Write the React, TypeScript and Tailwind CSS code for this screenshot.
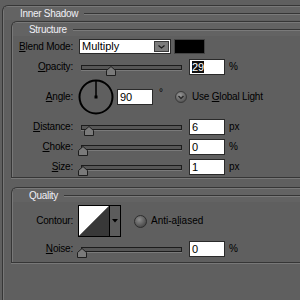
import React from 'react';

const labelCls = 'w-[60px] text-right text-[10px] leading-none tracking-[-0.2px] whitespace-nowrap text-black shrink-0';

function Etch() {
  return <div className="flex-1 h-[2px] border-t border-[#353535] bg-[#7a7a7a]" />;
}

function GroupTitle({ text, indent }: { text: string; indent: string }) {
  return (
    <div className="flex items-center h-[13px] bg-[#636363]">
      <span className={`${indent} pr-[6px] text-[10px] leading-none tracking-[-0.3px] text-[#f0f0f6] whitespace-nowrap`}>{text}</span>
      <Etch />
    </div>
  );
}

function Thumb({ left }: { left: number }) {
  return (
    <svg className="absolute top-0" style={{ left }} width="10" height="10" viewBox="0 0 10 10">
      <polygon points="0.5,9.5 0.5,4.5 5,0.5 9.5,4.5 9.5,9.5" fill="#7a7a7a" stroke="#1e1e1e" strokeWidth="1" />
    </svg>
  );
}

function Slider({ thumb }: { thumb: number }) {
  return (
    <div className="relative w-[101px] h-[5px] border border-[#1c1c1c] bg-[#565656] shadow-[0_1px_0_#7a7a7a]">
      <Thumb left={thumb} />
    </div>
  );
}

function Field({ value, selected }: { value: string; selected?: boolean }) {
  return (
    <div className="w-[36px] h-[16px] bg-white border border-[#2a2a2a] text-[11px] leading-[14px] pl-[2px] text-black">
      {selected ? <span className="bg-[#101010] text-white">{value}</span> : value}
    </div>
  );
}

function SliderRow({ label, thumb, value, unit, selected, mt }: { label: React.ReactNode; thumb: number; value: string; unit: string; selected?: boolean; mt: string }) {
  return (
    <div className={`flex items-center h-[16px] ${mt}`}>
      <div className={labelCls}>{label}</div>
      <div className="ml-[8px]">
        <Slider thumb={thumb} />
      </div>
      <div className="ml-[7px]">
        <Field value={value} selected={selected} />
      </div>
      <span className="ml-[4px] text-[10px] leading-none text-black">{unit}</span>
    </div>
  );
}

function Dial() {
  return (
    <svg width="36" height="36" viewBox="0 0 36 36">
      <circle cx="18" cy="18" r="16.5" fill="none" stroke="#000" strokeWidth="2" />
      <line x1="18" y1="18" x2="18" y2="2" stroke="#000" strokeWidth="1.5" />
      <rect x="16.5" y="16.5" width="3" height="3" fill="#000" />
    </svg>
  );
}

function GlobalIcon() {
  return (
    <svg width="12" height="12" viewBox="0 0 12 12">
      <defs>
        <radialGradient id="gl" cx="0.4" cy="0.35" r="0.7">
          <stop offset="0" stopColor="#9a9a9a" />
          <stop offset="1" stopColor="#4a4a4a" />
        </radialGradient>
      </defs>
      <circle cx="6" cy="6" r="5.5" fill="url(#gl)" stroke="#3a3a3a" />
      <path d="M3.5 5 L6 7.5 L8.5 5" fill="none" stroke="#2a2a2a" strokeWidth="1.5" />
    </svg>
  );
}

function Radio() {
  return (
    <svg width="13" height="13" viewBox="0 0 13 13">
      <defs>
        <radialGradient id="rb" cx="0.4" cy="0.35" r="0.75">
          <stop offset="0" stopColor="#8c8c8c" />
          <stop offset="1" stopColor="#3c3c3c" />
        </radialGradient>
      </defs>
      <circle cx="6.5" cy="6.5" r="6" fill="url(#rb)" stroke="#2e2e2e" />
    </svg>
  );
}

function Contour() {
  return (
    <div className="flex w-[43px] h-[32px] border border-black">
      <svg width="30" height="30" viewBox="0 0 30 30">
        <polygon points="0,0 30,0 0,30" fill="#fff" />
        <polygon points="0,30 30,0 30,30" fill="#383838" />
      </svg>
      <div className="flex-1 flex items-center justify-center bg-[#5c5c5c] border-l border-black">
        <svg width="6" height="4" viewBox="0 0 6 4">
          <polygon points="0,0 6,0 3,3.5" fill="#000" />
        </svg>
      </div>
    </div>
  );
}

export default function App() {
  return (
    <div className="w-[300px] h-[300px] overflow-hidden bg-[#5f5f5f] font-['Liberation_Sans',Arial,sans-serif] pt-[5px] pl-[2px]">
      <div className="w-[330px] h-[320px] border-l border-t border-[#363636] rounded-tl-[6px] shadow-[inset_1px_1px_0_#787878] pt-[1px] pl-[1px]">
        <GroupTitle text="Inner Shadow" indent="pl-[16px]" />
        <div className="ml-[7px] mt-[1px] w-[320px] h-[157px] border-l border-t border-b border-[#363636] rounded-tl-[6px] shadow-[inset_1px_1px_0_#787878,0_1px_0_#787878] pt-[1px] pl-[1px]">
          <GroupTitle text="Structure" indent="pl-[16px]" />

          <div className="flex items-center h-[15px] mt-[3px]">
            <div className={labelCls}><u>B</u>lend Mode:</div>
            <div className="ml-[6px] relative w-[92px] h-[15px] bg-white border border-[#2a2a2a] text-[11px] leading-[13px] pl-[2px] text-black">
              Multiply
              <div className="absolute right-[1px] top-[1px] w-[15px] h-[11px] bg-[#7c7c7c] border border-[#3a3a3a] flex items-center justify-center">
                <svg width="7" height="4" viewBox="0 0 7 4">
                  <path d="M0.5 0.5 L3.5 3 L6.5 0.5" fill="none" stroke="#1a1a1a" strokeWidth="1.2" />
                </svg>
              </div>
            </div>
            <div className="ml-[3px] w-[31px] h-[15px] bg-black border border-[#444]" />
          </div>

          <SliderRow label={<><u>O</u>pacity:</>} thumb={24} value="29" unit="%" selected mt="mt-[5px]" />

          <div className="flex items-center h-[36px] mt-[4px]">
            <div className={labelCls}><u>A</u>ngle:</div>
            <div className="ml-[5px]"><Dial /></div>
            <div className="ml-[3px]"><Field value="90" /></div>
            <span className="ml-[6px] self-start mt-[9px] text-[10px] leading-none text-black">°</span>
            <div className="ml-[12px]"><GlobalIcon /></div>
            <span className="ml-[5px] text-[10px] leading-none tracking-[-0.2px] whitespace-nowrap text-black">Use <u>G</u>lobal Light</span>
          </div>

          <SliderRow label={<><u>D</u>istance:</>} thumb={2} value="6" unit="px" mt="mt-[4px]" />
          <SliderRow label={<><u>C</u>hoke:</>} thumb={-4} value="0" unit="%" mt="mt-[4px]" />
          <SliderRow label={<><u>S</u>ize:</>} thumb={-4} value="1" unit="px" mt="mt-[4px]" />
        </div>

        <div className="ml-[7px] mt-[9px] w-[320px] h-[76px] border-l border-t border-b border-[#363636] rounded-tl-[6px] shadow-[inset_1px_1px_0_#787878,0_1px_0_#787878] pt-[1px] pl-[1px]">
          <GroupTitle text="Quality" indent="pl-[16px]" />
          <div className="flex items-center h-[32px] mt-[3px]">
            <div className={labelCls}>Contour:</div>
            <div className="ml-[5px]"><Contour /></div>
            <div className="ml-[13px]"><Radio /></div>
            <span className="ml-[4px] text-[10px] leading-none whitespace-nowrap text-black">Anti-a<u>l</u>iased</span>
          </div>
          <SliderRow label={<><u>N</u>oise:</>} thumb={-5} value="0" unit="%" mt="mt-[4px]" />
        </div>
      </div>
    </div>
  );
}
